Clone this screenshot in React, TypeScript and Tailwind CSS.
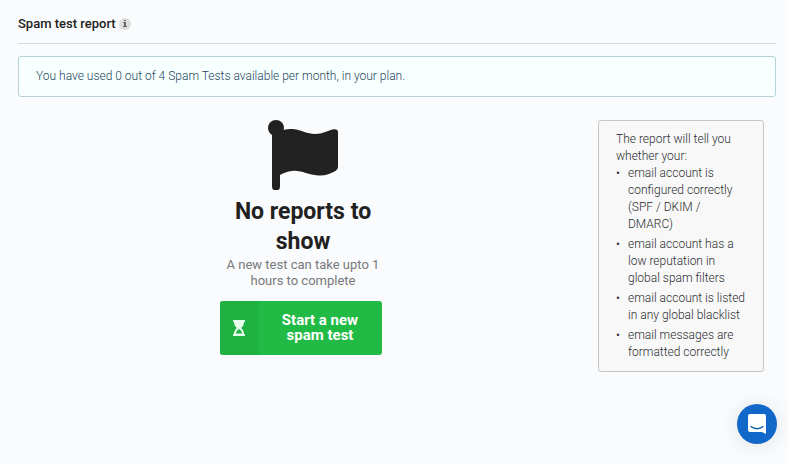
import { useState } from "react";

const reportItems = [
  "email account is configured correctly (SPF / DKIM / DMARC)",
  "email account has a low reputation in global spam filters",
  "email account is listed in any global blacklist",
  "email messages are formatted correctly",
];

function FlagIcon() {
  return (
    <svg width="70" height="70" viewBox="0 0 70 70" fill="currentColor" aria-hidden="true">
      <circle cx="8" cy="8" r="8" />
      <path d="M4 10h8v56.500q0 4-4 4t-4-4z" />
      <path d="M10 11C15 10 19 8.500 25 9C34 10 39 14 47 14C55 14 60 10.500 65.500 9.300Q70 8.700 70 12.500V47Q70 49.500 67.500 51C62 54 57 56 50 55.500C40 55 33 50 24 51C19 51.500 16 53 12 55H10z" />
    </svg>
  );
}

function HourglassIcon() {
  return (
    <svg width="12" height="16" viewBox="0 0 12 16" className="text-[#e6ffec]" aria-hidden="true">
      <path
        fill="currentColor"
        fillRule="evenodd"
        d="M0 0h12v2h-1c0 3-1.200 4.600-3 6 1.800 1.400 3 3 3 6h1v2H0v-2h1c0-3 1.200-4.600 3-6C2.200 6.600 1 5 1 2H0zM6 9c-1.700 1.200-2.800 2.500-3 4.500h6C8.800 11.500 7.700 10.200 6 9z"
      />
    </svg>
  );
}

function ChatIcon() {
  return (
    <svg width="18" height="20" viewBox="0 0 18 20" aria-hidden="true">
      <path fill="#fff" d="M2 0h14q2 0 2 2v18l-4-2H2q-2 0-2-2V2q0-2 2-2z" />
      <path d="M3 12.500c3.500 3 8.500 3 12 0" fill="none" stroke="#0f5fae" strokeWidth="1.400" strokeLinecap="round" />
    </svg>
  );
}

export default function App() {
  const [chatOpen, setChatOpen] = useState(false);

  return (
    <div className="min-h-screen bg-[#fafbfd] pl-[18px] pr-3 font-['Roboto',sans-serif] text-[#212121]">
      <header className="flex items-center gap-[3px] border-b border-[#d5d9dc] pt-3 pb-2">
        <h1 className="text-[13px] leading-[23px] font-medium">Spam test report</h1>
        <button
          type="button"
          aria-label="About the spam test report"
          className="flex size-3 items-center justify-center rounded-full bg-[#dcdddd] text-[#666]"
        >
          <svg width="4" height="7" viewBox="0 0 4 7" fill="currentColor" aria-hidden="true">
            <path d="M1 0h2v1H1zM0 2h3v4h1v1H0V6h1V3H0z" />
          </svg>
        </button>
      </header>

      <p className="mt-3 rounded-[3px] border border-[#b5d3d6] bg-[#f8ffff] px-[17px] py-[10px] text-xs leading-[19px] font-light text-[#1c465c]">
        You have used 0 out of 4 Spam Tests available per month, in your plan.
      </p>

      <main className="mt-[23px] flex items-start pr-3">
        <section className="flex flex-1 flex-col items-center pr-[10px] text-center">
          <div className="flex w-[166px] flex-col items-center">
            <FlagIcon />
            <h2 className="mt-[7px] text-[23px] leading-[30px] font-bold">No reports to show</h2>
            <p className="text-[13px] leading-4 text-[#77797b]">A new test can take upto 1 hours to complete</p>
            <button
              type="button"
              className="mt-3 flex w-[162px] self-start overflow-hidden rounded-[3px] bg-[#21ba45] text-white"
            >
              <span className="flex w-[38px] items-center justify-center self-stretch bg-[#1fb141]">
                <HourglassIcon />
              </span>
              <span className="flex-1 px-5 py-3 text-[15px] leading-[15px] font-bold">Start a new spam test</span>
            </button>
          </div>
        </section>

        <aside className="w-[166px] rounded-[3px] border border-[#c3c5c6] bg-[#f8f8f9] px-[17px] py-[10px] text-xs leading-[17px] font-light text-[#2c2e2f]">
          <p>The report will tell you whether your:</p>
          <ul className="flex flex-col gap-[3px]">
            {reportItems.map((item) => (
              <li key={item} className="flex">
                <span className="w-3 shrink-0">•</span>
                <span>{item}</span>
              </li>
            ))}
          </ul>
        </aside>
      </main>

      <button
        type="button"
        aria-label="Open chat"
        aria-expanded={chatOpen}
        onClick={() => setChatOpen(!chatOpen)}
        className="fixed right-[11px] bottom-5 flex size-10 items-center justify-center rounded-full bg-[#1268c8] shadow-[0_1px_20px_rgba(0,0,0,0.1)]"
      >
        <ChatIcon />
      </button>
    </div>
  );
}
